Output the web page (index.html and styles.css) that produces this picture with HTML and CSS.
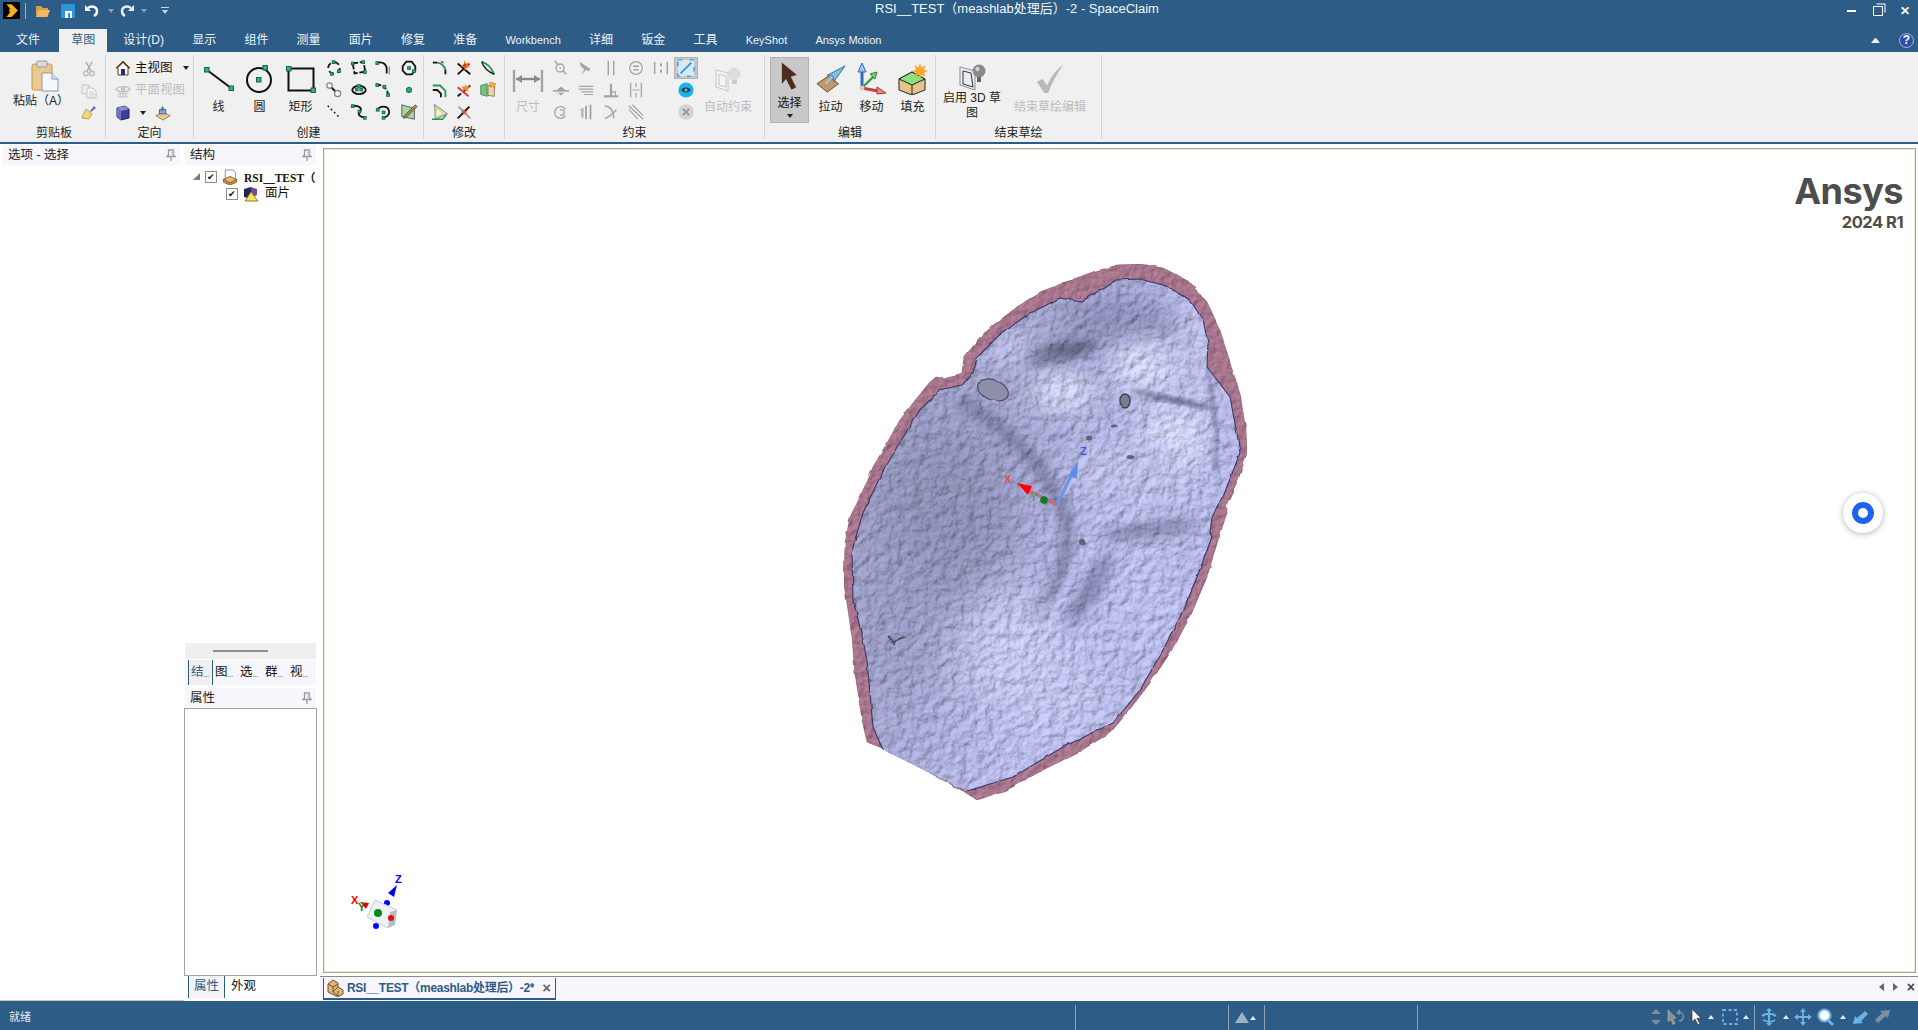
FILE: index.html
```html
<!DOCTYPE html>
<html lang="zh">
<head>
<meta charset="utf-8">
<title>SpaceClaim</title>
<link rel="stylesheet" href="styles.css">
</head>
<body>
<svg class="defs" xmlns="http://www.w3.org/2000/svg">
<defs>
<symbol id="logo" viewBox="0 0 16 16"><rect width="16" height="16" fill="#000"/><path d="M3 2h5l6 6-6 6H3l5-6z" fill="#fbb116"/><path d="M3 2l5 6-5 6z" fill="#000"/><path d="M6 6l3 2-3 2z" fill="#fbb116"/></symbol>
<symbol id="folder" viewBox="0 0 16 14"><path d="M1 2h5l2 2h5v2H4L1 12z" fill="#d9a04c"/><path d="M3.5 6H15l-2.5 7H1z" fill="#f2b860"/></symbol>
<symbol id="save" viewBox="0 0 14 14"><rect width="14" height="14" fill="#2a94dd"/><rect x="4" y="7" width="7" height="7" fill="#fff"/><rect x="7" y="9" width="2" height="5" fill="#2a94dd"/></symbol>
<symbol id="undo" viewBox="0 0 16 16"><path d="M4 5c4-3 9-1 9 3 0 2-1 4-3 5" fill="none" stroke="#fff" stroke-width="2.4"/><path d="M1 2v6h6z" fill="#fff"/></symbol>
<symbol id="redo" viewBox="0 0 16 16"><path d="M12 5C8 2 3 4 3 8c0 2 1 4 3 5" fill="none" stroke="#e8eef4" stroke-width="2.4"/><path d="M15 2v6H9z" fill="#e8eef4"/></symbol>
<symbol id="paste" viewBox="0 0 28 32"><rect x="1" y="4" width="20" height="26" rx="2" fill="#ebc98c" stroke="#c09a58"/><rect x="6" y="1" width="10" height="6" rx="1" fill="#dcdcdc" stroke="#999"/><path d="M11 13h10l6 6v12H11z" fill="#f6f7fc" stroke="#8a94b8"/><path d="M21 13v6h6" fill="#dfe2f0" stroke="#8a94b8"/></symbol>
<symbol id="cut" viewBox="0 0 16 16"><path d="M5 1l5 9M11 1L6 10" stroke="#aaa" stroke-width="1.5"/><circle cx="5" cy="12.500" r="2.300" fill="none" stroke="#bbb" stroke-width="1.400"/><circle cx="11" cy="12.500" r="2.300" fill="none" stroke="#bbb" stroke-width="1.400"/></symbol>
<symbol id="copy" viewBox="0 0 16 16"><path d="M1 2h7v9H1z" fill="#eee" stroke="#c4c4c4"/><path d="M6 5h6l3 3v7H6z" fill="#f4f4f4" stroke="#c4c4c4"/><path d="M8 9h5M8 11h5M8 13h5" stroke="#ccc"/></symbol>
<symbol id="brush" viewBox="0 0 16 16"><path d="M9 6l4-5 2 2-5 4z" fill="#6a72b4"/><path d="M5 4l6 5-3 5-7-1 1-3z" fill="#eed97a" stroke="#b8a35c"/></symbol>
<symbol id="house" viewBox="0 0 16 16"><path d="M8 1L1 8h2v7h10V8h2z" fill="#fff" stroke="#5a3a10"/><path d="M8 1L1 8h2l5-5 5 5h2z" fill="#7a4a14"/><rect x="6" y="9" width="4" height="6" fill="#2a2a7a"/></symbol>
<symbol id="planview" viewBox="0 0 18 18"><path d="M1 7c3-4 13-4 16 0-3 4-13 4-16 0z" fill="none" stroke="#bbb" stroke-width="1.400"/><circle cx="9" cy="7" r="2.500" fill="#c4c4c4"/><path d="M3 12h12M3 15h12M6 10v7M9 10v7M12 10v7" stroke="#c4c4c4"/></symbol>
<symbol id="cube" viewBox="0 0 14 16"><path d="M1 3l8-2 4 3v9l-8 2-4-3z" fill="#3b3f9a" stroke="#23235a"/><path d="M1 3l8-2 4 3-8 2z" fill="#8b8fd8"/><path d="M1 3l4 3v9l-4-3z" fill="#6d71c4"/></symbol>
<symbol id="orient" viewBox="0 0 18 18"><path d="M1 12l8-4 8 4-8 5z" fill="#e9c98c" stroke="#8a7a5a"/><path d="M5 5h7v5H5z" fill="#8ea8d8" stroke="#556"/><path d="M8 1l3 3H9v3H7V4z" fill="#4b6fb8"/></symbol>
<symbol id="bline" viewBox="0 0 32 26"><path d="M4 4l24 18" stroke="#111" stroke-width="2"/><rect class="n5" x="1.500" y="1.500" width="4.500" height="4.500"/><rect class="n5" x="26" y="20" width="4.500" height="4.500"/></symbol>
<symbol id="bcircle" viewBox="0 0 30 30"><circle cx="14" cy="16" r="12" fill="none" stroke="#111" stroke-width="2"/><rect class="n5" x="11.500" y="13.500" width="4.500" height="4.500"/><rect class="n5" x="18" y="1.500" width="4.500" height="4.500"/></symbol>
<symbol id="brect" viewBox="0 0 32 28"><rect x="3.500" y="3.500" width="25" height="22" fill="none" stroke="#111" stroke-width="2"/><rect class="n5" x="1.500" y="1.500" width="4.500" height="4.500"/><rect class="n5" x="26" y="23" width="4.500" height="4.500"/></symbol>
<symbol id="c1" viewBox="0 0 20 20"><circle cx="10" cy="10" r="6.500" fill="none" stroke="#111" stroke-width="2" stroke-dasharray="6 4"/><rect class="n" x="8" y="2" width="3" height="3"/><rect class="n" x="14" y="12" width="3" height="3"/><rect class="n" x="6" y="15" width="3" height="3"/></symbol>
<symbol id="c2" viewBox="0 0 20 20"><path d="M3 5l12-2 2 11-12 2z" fill="none" stroke="#111" stroke-width="2" stroke-dasharray="6 2"/><rect class="n" x="1.500" y="3.500" width="3" height="3"/><rect class="n" x="13" y="2" width="3" height="3"/><rect class="n" x="15" y="13" width="3" height="3"/></symbol>
<symbol id="c3" viewBox="0 0 20 20"><path d="M2 4c6-1 10 1 11 6v6" fill="none" stroke="#111" stroke-width="2"/><path d="M16 8v9" stroke="#5a9" stroke-width="1.500"/><rect class="n" x="1" y="3" width="3" height="3"/></symbol>
<symbol id="c4" viewBox="0 0 20 20"><path d="M7 3h6l4 5v5l-4 4H7l-4-4V8z" fill="none" stroke="#111" stroke-width="2"/><rect class="n" x="8.500" y="8.500" width="3" height="3"/><rect class="n" x="14" y="12" width="3" height="3"/></symbol>
<symbol id="c5" viewBox="0 0 20 20"><path d="M5 5l10 10" stroke="#111" stroke-width="2"/><circle cx="5" cy="5" r="3" fill="#fff" stroke="#888" stroke-width="1.500"/><circle cx="14" cy="14" r="3.400" fill="#fff" stroke="#888" stroke-width="1.500"/></symbol>
<symbol id="c6" viewBox="0 0 20 20"><ellipse cx="10" cy="10" rx="7.500" ry="4.500" fill="none" stroke="#111" stroke-width="2"/><rect class="n" x="6" y="8" width="3" height="3"/><rect class="n" x="11" y="8" width="3" height="3"/><rect class="n" x="8.500" y="4" width="3" height="3"/></symbol>
<symbol id="c7" viewBox="0 0 20 20"><path d="M2 4c6 0 12 4 13 13" fill="none" stroke="#111" stroke-width="2" stroke-dasharray="5 2"/><rect class="n" x="1" y="3" width="3" height="3"/><rect class="n" x="9" y="5" width="3" height="3"/><rect class="n" x="13" y="14" width="3" height="3"/></symbol>
<symbol id="c8" viewBox="0 0 20 20"><circle cx="10" cy="10" r="3" fill="#2da56c" stroke="#0d6b3f"/></symbol>
<symbol id="c9" viewBox="0 0 20 20"><path d="M3 3l14 14" stroke="#111" stroke-width="1.600" stroke-dasharray="2 3"/></symbol>
<symbol id="c10" viewBox="0 0 20 20"><path d="M3 3c8 0 11 3 8 7-3 3 0 6 6 6" fill="none" stroke="#111" stroke-width="2"/><rect class="n" x="1.500" y="2" width="3" height="3"/><rect class="n" x="9" y="8" width="3" height="3"/><rect class="n" x="15" y="15" width="3" height="3"/></symbol>
<symbol id="c11" viewBox="0 0 20 20"><path d="M3 7C6 3 13 3 15 7s0 8-5 9" fill="none" stroke="#111" stroke-width="2"/><rect class="n" x="8" y="9" width="3" height="3"/><rect class="n" x="8" y="15" width="3" height="3"/><rect class="n" x="1.500" y="6" width="3" height="3"/></symbol>
<symbol id="c12" viewBox="0 0 20 20"><path d="M2 2l14 4v12L2 15z" fill="#a8d4a0" stroke="#555"/><path d="M17 2l2 2L7 16l-3 1 1-3z" fill="#b08a50" stroke="#554"/></symbol>
<symbol id="m1" viewBox="0 0 20 20"><path d="M2 4h5" stroke="#111" stroke-width="2"/><path d="M7 4c5 1 8 4 9 8" fill="none" stroke="#1d9a4c" stroke-width="2"/><path d="M16 12v5" stroke="#111" stroke-width="2"/><path d="M11 3l3 1" stroke="#c44" stroke-width="2"/></symbol>
<symbol id="m2" viewBox="0 0 20 20"><path d="M3 17L16 5M3 5l14 12" stroke="#111" stroke-width="2"/><path d="M10 1l2 4 4-1-2 4 4 1-5 1-2 3-1-4-4-1 4-2z" fill="#f08a1c"/><circle cx="11" cy="7" r="2" fill="#e03020"/></symbol>
<symbol id="m3" viewBox="0 0 20 20"><path d="M3 3c6 2 11 7 14 14" fill="none" stroke="#1d9a4c" stroke-width="2"/><path d="M3 3c2 6 7 11 14 14" fill="none" stroke="#222" stroke-width="1.600"/></symbol>
<symbol id="m4" viewBox="0 0 20 20"><path d="M2 5h8l6 6v7" fill="none" stroke="#1d9a4c" stroke-width="2"/><path d="M2 10h5l4 4v4" fill="none" stroke="#111" stroke-width="2"/></symbol>
<symbol id="m5" viewBox="0 0 20 20"><path d="M3 17L17 5" stroke="#111" stroke-width="2" stroke-dasharray="5 2"/><path d="M3 7l12 10" stroke="#d33" stroke-width="2"/><path d="M12 3l1 3 4 0-3 3 1 3-4-2-3 2 1-4-2-2 4 0z" fill="#f08a1c"/></symbol>
<symbol id="m6" viewBox="0 0 20 20"><path d="M2 5l7-2v14l-7-2z" fill="#7ac47a" stroke="#386"/><path d="M10 5l7-1v13l-7-1z" fill="#ead9a8" stroke="#876"/><path d="M15 1l1 2 3 0-2 2 1 3-3-2-3 1 1-3-2-2 3 0z" fill="#f4c020" stroke="#d33" stroke-width=".5"/></symbol>
<symbol id="m7" viewBox="0 0 20 20"><path d="M4 2l14 10-13 6z" fill="none" stroke="#999" stroke-width="1.500"/><path d="M6 6l8 6-9 4z" fill="none" stroke="#cc2"/><path d="M1 18h12l4-5" fill="none" stroke="#1d9a4c" stroke-width="1.500"/></symbol>
<symbol id="m8" viewBox="0 0 20 20"><path d="M3 17L16 4" stroke="#111" stroke-width="2"/><path d="M4 4l13 13" stroke="#999" stroke-width="2"/><path d="M10 6l1 3 3 1-3 1-1 3-1-3-3-1 3-1z" fill="#e05a20"/></symbol>
<symbol id="dim" viewBox="0 0 32 24"><path d="M2 1v22M30 1v22" stroke="#a4a4a4" stroke-width="2.400"/><path d="M4 10h24" stroke="#888" stroke-width="2.400"/><path d="M4 10l6-4v8zM28 10l-6-4v8z" fill="#888"/></symbol>
<symbol id="k1" viewBox="0 0 20 20"><circle cx="9" cy="10" r="4.500" fill="none" stroke="#a4a4a4" stroke-width="1.600"/><path d="M3 2l4 5M12 13l4 4" stroke="#a4a4a4" stroke-width="1.600"/><circle cx="9" cy="10" r="1" fill="#a4a4a4"/></symbol>
<symbol id="k2" viewBox="0 0 20 20"><path d="M3 3l12 8-2 3-3-2-5 6 3-7-4-3z" fill="#a4a4a4"/></symbol>
<symbol id="k3" viewBox="0 0 20 20"><path d="M7 2v16M13 2v16" stroke="#a4a4a4" stroke-width="1.600"/></symbol>
<symbol id="k4" viewBox="0 0 20 20"><circle cx="10" cy="10" r="7" fill="none" stroke="#a4a4a4" stroke-width="1.400"/><path d="M7 8h6M7 12h6" stroke="#999" stroke-width="1.500"/></symbol>
<symbol id="k5" viewBox="0 0 20 20"><path d="M3 3v14M17 3v14" stroke="#a4a4a4" stroke-width="1.600"/><path d="M10 5v3M10 12v3" stroke="#999" stroke-width="2"/></symbol>
<symbol id="k6" viewBox="0 0 20 20"><path d="M1 11h18" stroke="#a4a4a4" stroke-width="1.800"/><path d="M10 6l6 5H4z" fill="#a4a4a4"/><path d="M6 13h8l-4 3z" fill="#a4a4a4"/></symbol>
<symbol id="k7" viewBox="0 0 20 20"><path d="M2 6h16M2 9l16 0M5 12h13M8 15h10" stroke="#a4a4a4" stroke-width="1.300"/></symbol>
<symbol id="k8" viewBox="0 0 20 20"><path d="M2 17h16" stroke="#a4a4a4" stroke-width="2.400"/><path d="M10 3v14" stroke="#a4a4a4" stroke-width="2.400"/><path d="M10 12h5v5" fill="none" stroke="#a4a4a4" stroke-width="1.300"/></symbol>
<symbol id="k9" viewBox="0 0 20 20"><path d="M4 2v16M16 2v16" stroke="#a4a4a4" stroke-width="1.500"/><path d="M10 2v5M10 13v5M6 10h8" stroke="#a4a4a4" stroke-width="1.300"/></symbol>
<symbol id="k10" viewBox="0 0 20 20"><path d="M15 7a6.500 6.500 0 1 0 0 7" fill="none" stroke="#a4a4a4" stroke-width="1.500"/><path d="M9 8a3 3 0 1 1 0 5" fill="none" stroke="#a4a4a4" stroke-width="1.500"/></symbol>
<symbol id="k11" viewBox="0 0 20 20"><path d="M6 7v9M10 3v15M15 2v16" stroke="#a4a4a4" stroke-width="2"/><path d="M3 8l5-2" stroke="#a4a4a4"/></symbol>
<symbol id="k12" viewBox="0 0 20 20"><path d="M3 3c7 1 10 5 10 14" fill="none" stroke="#a4a4a4" stroke-width="1.700"/><path d="M3 17c4 0 8-5 13-9" fill="none" stroke="#a4a4a4" stroke-width="1.700"/></symbol>
<symbol id="k13" viewBox="0 0 20 20"><path d="M2 3l16 15M6 2l12 12M2 7l10 11" stroke="#a4a4a4" stroke-width="1.400"/></symbol>
<symbol id="sel3d" viewBox="0 0 20 20"><rect x="1" y="1" width="18" height="18" fill="#dbe8f4" stroke="#23a7e0" stroke-width="1.600" stroke-dasharray="5 8"/><path d="M4 16L16 4" stroke="#1f9fd8" stroke-width="2"/></symbol>
<symbol id="eye" viewBox="0 0 20 20"><circle cx="10" cy="10" r="9.500" fill="#14b4ec"/><path d="M4 10c3-4 9-4 12 0-3 4-9 4-12 0z" fill="#234" /><circle cx="10" cy="10" r="2" fill="#9ad"/></symbol>
<symbol id="xcirc" viewBox="0 0 20 20"><circle cx="10" cy="10" r="8.500" fill="#d4d4d4"/><path d="M6.500 6.500l7 7M13.500 6.500l-7 7" stroke="#999" stroke-width="2"/></symbol>
<symbol id="auto3d" viewBox="0 0 28 28"><path d="M2 5l12 3v18L2 22z" fill="#f4f4f4" stroke="#c6c6c6"/><path d="M5 9l7 2v11l-7-2z" fill="none" stroke="#c6c6c6"/><circle cx="20" cy="9" r="6.500" fill="#dcdcdc"/><path d="M18 15h5v4h-5z" fill="#ccc"/></symbol>
<symbol id="en3d" viewBox="0 0 28 28"><path d="M2 4l15 4v19L2 22z" fill="#ecedf2" stroke="#8b8b8b"/><path d="M5 8l8 2 2 14-10-3z" fill="none" stroke="#333"/><circle cx="21" cy="8" r="6.500" fill="#8a8a8a"/><circle cx="19.500" cy="6" r="2.200" fill="#d0d0d0"/><path d="M19 14h4v5h-4z" fill="#666"/></symbol>
<symbol id="arrow" viewBox="0 0 22 34"><path d="M2 1l18 15-7 2 6 12-6 3-6-12-5 6z" fill="#4b2c20" stroke="#d0c8c0" stroke-width=".8"/></symbol>
<symbol id="pull" viewBox="0 0 32 30"><path d="M1 20l12-8 11 8-12 9z" fill="#c4986a" stroke="#6a4a30"/><path d="M10 20L24 6" stroke="#9ad0ec" stroke-width="2"/><path d="M31 1L12 11l6 1 1 6z" fill="#7cc0e4" stroke="#356a90"/></symbol>
<symbol id="move" viewBox="0 0 30 32"><path d="M5 3v22" stroke="#3468c0" stroke-width="3"/><path d="M5 0l-4 9h8z" fill="#9acbe4" stroke="#3468c0"/><path d="M5 25l12-12" stroke="#2aa048" stroke-width="2.400"/><path d="M20 9l-7 2 5 5z" fill="#7cd07c" stroke="#2a8038"/><path d="M5 25l16 3" stroke="#c84040" stroke-width="3"/><path d="M29 30l-9-6v7z" fill="#e88" stroke="#a33"/><circle cx="5" cy="25" r="2.500" fill="#dca"/></symbol>
<symbol id="fill" viewBox="0 0 30 32"><path d="M1 16l13-7 13 7v11l-13 5-13-5z" fill="#e7c48a" stroke="#222"/><path d="M1 16l13-7 13 7-13 6z" fill="#8ee07c" stroke="#222"/><path d="M14 22v10" stroke="#222"/><path d="M22 0l1.500 4.500 4-2.500-1.500 4.500 4 1.500-4 1.500 1.500 4.500-4-2.500-1.500 4.500-1.500-4.500-4 2.500 1.500-4.500-4-1.500 4-1.500-1.500-4.500 4 2.500z" fill="#f7a82a"/></symbol>
<symbol id="check" viewBox="0 0 30 32"><path d="M1 19l6-3 5 7C16 13 22 6 29 1 23 10 17 20 13 31H9z" fill="#b9b9b9"/></symbol>
<symbol id="part" viewBox="0 0 16 17"><path d="M3 1l8 0 3 3v8H3z" fill="#fff" stroke="#7a8db8"/><path d="M1 11l7-3 7 3-7 4z" fill="#e7b878" stroke="#8a5a28"/><path d="M1 11v3l7 3 7-3v-3l-7 4z" fill="#cf9a58" stroke="#8a5a28"/></symbol>
<symbol id="facet" viewBox="0 0 16 16"><path d="M1 3l7-2v12l-7-2z" fill="#23265c"/><path d="M8 1l6 2v6l-6 3z" fill="#7a4a8a"/><path d="M8 6l7 9H2z" fill="#f8e654" stroke="#86802a"/></symbol>
<symbol id="blocks" viewBox="0 0 18 18"><path d="M1 5l5-4 5 3v4l5 3v4l-5 3-10-5z" fill="#e1b477" stroke="#7a5028"/><path d="M1 5l5 3 5-3M6 8v5l5 4v-5M11 8l-5 5" fill="none" stroke="#7a5028"/></symbol>
<symbol id="pin" viewBox="0 0 10 12"><path d="M2.500 1h5v5l1.500 1.500h-8L2.500 6zM5 8v4" fill="none" stroke="#9a9a9a" stroke-width="1.300"/><path d="M5.500 1h2v5h-2z" fill="#c4c4c4"/></symbol>
<symbol id="sb-updown" viewBox="0 0 12 18"><path d="M6 1l5 5H1zM6 17l5-5H1z" fill="#7f8ea0"/></symbol>
<symbol id="sb-undo" viewBox="0 0 18 18"><path d="M1 2l8 8-3 .5 2 5-2 1-2-5-3 2z" fill="#8c8c8c" stroke="#ccc" stroke-width=".5"/><path d="M10 5c4-2 7 1 6 5-.5 2-2 3-4 3" fill="none" stroke="#7f8ea0" stroke-width="1.600"/><path d="M13 1l-4 4 4 2z" fill="#7f8ea0"/></symbol>
<symbol id="sb-cursor" viewBox="0 0 12 18"><path d="M1 1l9 9-4 .5 3 5.500-2 1-3-6-3 3z" fill="#fff" stroke="#333" stroke-width=".7"/></symbol>
<symbol id="sb-rect" viewBox="0 0 16 16"><rect x="1" y="1" width="14" height="14" fill="none" stroke="#6cb2e6" stroke-width="1.800" stroke-dasharray="3 2.500"/></symbol>
<symbol id="sb-spin" viewBox="0 0 18 18"><path d="M9 1v16M2 8c4-3 10-3 14 0" fill="none" stroke="#6cb2e6" stroke-width="2.200"/><path d="M3 12c4 2 9 2 12 0" fill="none" stroke="#6cb2e6" stroke-width="1.600"/><path d="M9 0l3 3H6zM9 18l3-3H6z" fill="#6cb2e6"/></symbol>
<symbol id="sb-pan" viewBox="0 0 18 18"><path d="M9 2v14M2 9h14" stroke="#6cb2e6" stroke-width="1.800"/><path d="M9 0l3 4H6zM9 18l3-4H6zM0 9l4-3v6zM18 9l-4-3v6z" fill="#6cb2e6"/></symbol>
<symbol id="sb-zoom" viewBox="0 0 18 18"><circle cx="7.500" cy="7.500" r="6" fill="#fff" stroke="#6cb2e6" stroke-width="2.200"/><path d="M11 12l5 5" stroke="#6cb2e6" stroke-width="3"/></symbol>
<symbol id="sb-prev" viewBox="0 0 18 18"><path d="M2 16l2-8 2 2 8-7 3 3-7 7 2 2z" fill="#6cb2e6"/></symbol>
<symbol id="sb-next" viewBox="0 0 18 18"><path d="M16 2l-2 8-2-2-8 7-3-3 7-7-2-2z" fill="#7f8ea0"/></symbol>
<filter id="bump" x="0" y="0" width="100%" height="100%" color-interpolation-filters="sRGB">
<feTurbulence type="fractalNoise" baseFrequency="0.11" numOctaves="4" seed="7" result="n"/>
<feDiffuseLighting in="n" surfaceScale="1.700" diffuseConstant="1" lighting-color="#fff" result="l"><feDistantLight azimuth="225" elevation="66"/></feDiffuseLighting>
<feComposite in="SourceGraphic" in2="l" operator="arithmetic" k1="1.090" k2="0" k3="0" k4="0"/>
</filter>
<filter id="bump2" x="0" y="0" width="100%" height="100%" color-interpolation-filters="sRGB">
<feTurbulence type="fractalNoise" baseFrequency="0.16" numOctaves="2" seed="3" result="n"/>
<feDiffuseLighting in="n" surfaceScale="1.200" diffuseConstant="1" lighting-color="#fff" result="l"><feDistantLight azimuth="225" elevation="65"/></feDiffuseLighting>
<feComposite in="SourceGraphic" in2="l" operator="arithmetic" k1="1.100" k2="0" k3="0" k4="0"/>
</filter>
<filter id="rough" x="-5%" y="-5%" width="110%" height="110%">
<feTurbulence type="fractalNoise" baseFrequency="0.08" numOctaves="2" seed="11" result="d"/>
<feDisplacementMap in="SourceGraphic" in2="d" scale="3" xChannelSelector="R" yChannelSelector="G"/>
</filter>
<filter id="b6" x="-60%" y="-60%" width="220%" height="220%"><feGaussianBlur stdDeviation="6"/></filter>
<filter id="b12" x="-60%" y="-60%" width="220%" height="220%"><feGaussianBlur stdDeviation="12"/></filter>
<filter id="b26" x="-60%" y="-60%" width="220%" height="220%"><feGaussianBlur stdDeviation="24"/></filter>
<filter id="b2" x="-30%" y="-30%" width="160%" height="160%"><feGaussianBlur stdDeviation="2"/></filter>
<linearGradient id="lav" gradientUnits="userSpaceOnUse" x1="860" y1="500" x2="1170" y2="650"><stop offset="0" stop-color="#9fa2c8"/><stop offset=".4" stop-color="#a6a9d4"/><stop offset=".72" stop-color="#babdea"/><stop offset="1" stop-color="#b5b9e6"/></linearGradient>
<clipPath id="inner"><polygon points="854,543 863,513 880,477 897,447 920,410 940,390 962,385 973,373 977,358 997,337 1027,315 1060,298 1080,302 1097,293 1117,280 1140,279 1163,285 1190,300 1203,320 1208,343 1207,367 1230,397 1238,440 1240,453 1223,497 1212,517 1210,533 1212,537 1197,577 1180,617 1163,650 1140,690 1113,723 1063,747 1013,777 967,791 930,773 883,750 873,727 867,660 863,640 853,600 852,553"/></clipPath>
</defs>
</svg>

<div class="app">
<header class="titlebar">
  <div class="qat">
    <svg class="i16 logo"><use href="#logo"/></svg>
    <span class="qsep"></span>
    <svg class="i16 q-folder"><use href="#folder"/></svg>
    <svg class="i14 q-save"><use href="#save"/></svg>
    <svg class="i16 q-undo"><use href="#undo"/></svg>
    <span class="tri-d tri-grey q-d1"></span>
    <svg class="i16 q-redo"><use href="#redo"/></svg>
    <span class="tri-d tri-grey q-d2"></span>
    <span class="q-more"></span>
  </div>
  <div class="title">RSI__TEST（meashlab处理后）-2 - SpaceClaim</div>
  <div class="winbtns">
    <span class="w-min"></span>
    <span class="w-max"></span>
    <span class="w-close">✕</span>
  </div>
</header>

<nav class="tabs">
  <span class="tab tab-file">文件</span>
  <span class="tab tab-active">草图</span>
  <span class="tab">设计(D)</span>
  <span class="tab">显示</span>
  <span class="tab">组件</span>
  <span class="tab">测量</span>
  <span class="tab">面片</span>
  <span class="tab">修复</span>
  <span class="tab">准备</span>
  <span class="tab tab-en">Workbench</span>
  <span class="tab">详细</span>
  <span class="tab">钣金</span>
  <span class="tab">工具</span>
  <span class="tab tab-en">KeyShot</span>
  <span class="tab tab-en">Ansys Motion</span>
  <span class="tabs-right">
    <span class="collapse"></span>
    <span class="help">?</span>
  </span>
</nav>

<section class="ribbon">
  <div class="group g-clip">
    <div class="gbody">
      <div class="big w76"><span class="bigicon bi-paste"><svg class="s-paste"><use href="#paste"/></svg></span><span class="biglab">粘贴（A）</span></div>
      <div class="smallcol">
        <svg class="i16"><use href="#cut"/></svg>
        <svg class="i16"><use href="#copy"/></svg>
        <svg class="i16"><use href="#brush"/></svg>
      </div>
    </div>
    <div class="glabel">剪贴板</div>
  </div>
  <div class="group g-orient">
    <div class="gbody gcol">
      <div class="orow"><svg class="i16"><use href="#house"/></svg><span class="olab">主视图</span><span class="tri-d tri-dark o-d1"></span></div>
      <div class="orow off"><svg class="i16"><use href="#planview"/></svg><span class="olab">平面视图</span></div>
      <div class="orow"><svg class="i16"><use href="#cube"/></svg><span class="tri-d tri-dark o-d2"></span><svg class="i16 o-i3"><use href="#orient"/></svg></div>
    </div>
    <div class="glabel">定向</div>
  </div>
  <div class="group g-create">
    <div class="gbody">
      <div class="big w41"><span class="bigicon"><svg class="s-line"><use href="#bline"/></svg></span><span class="biglab">线</span></div>
      <div class="big w41"><span class="bigicon"><svg class="s-circ"><use href="#bcircle"/></svg></span><span class="biglab">圆</span></div>
      <div class="big w41"><span class="bigicon"><svg class="s-rect"><use href="#brect"/></svg></span><span class="biglab">矩形</span></div>
      <div class="grid g4">
        <svg class="i18"><use href="#c1"/></svg><svg class="i18"><use href="#c2"/></svg><svg class="i18"><use href="#c3"/></svg><svg class="i18"><use href="#c4"/></svg>
        <svg class="i18"><use href="#c5"/></svg><svg class="i18"><use href="#c6"/></svg><svg class="i18"><use href="#c7"/></svg><svg class="i18"><use href="#c8"/></svg>
        <svg class="i18"><use href="#c9"/></svg><svg class="i18"><use href="#c10"/></svg><svg class="i18"><use href="#c11"/></svg><svg class="i18"><use href="#c12"/></svg>
      </div>
    </div>
    <div class="glabel">创建</div>
  </div>
  <div class="group g-modify">
    <div class="gbody">
      <div class="grid g3">
        <svg class="i18"><use href="#m1"/></svg><svg class="i18"><use href="#m2"/></svg><svg class="i18"><use href="#m3"/></svg>
        <svg class="i18"><use href="#m4"/></svg><svg class="i18"><use href="#m5"/></svg><svg class="i18"><use href="#m6"/></svg>
        <svg class="i18"><use href="#m7"/></svg><svg class="i18"><use href="#m8"/></svg><span></span>
      </div>
    </div>
    <div class="glabel">修改</div>
  </div>
  <div class="group g-cons">
    <div class="gbody">
      <div class="big w40 off"><span class="bigicon"><svg class="s-dim"><use href="#dim"/></svg></span><span class="biglab">尺寸</span></div>
      <div class="grid g6">
        <svg class="i18"><use href="#k1"/></svg><svg class="i18"><use href="#k2"/></svg><svg class="i18"><use href="#k3"/></svg><svg class="i18"><use href="#k4"/></svg><svg class="i18"><use href="#k5"/></svg><span class="cell-on"><svg class="i18"><use href="#sel3d"/></svg></span>
        <svg class="i18"><use href="#k6"/></svg><svg class="i18"><use href="#k7"/></svg><svg class="i18"><use href="#k8"/></svg><svg class="i18"><use href="#k9"/></svg><span></span><svg class="i16"><use href="#eye"/></svg>
        <svg class="i18"><use href="#k10"/></svg><svg class="i18"><use href="#k11"/></svg><svg class="i18"><use href="#k12"/></svg><svg class="i18"><use href="#k13"/></svg><span></span><svg class="i18"><use href="#xcirc"/></svg>
      </div>
      <div class="big w60 off"><span class="bigicon"><svg class="s-3d"><use href="#auto3d"/></svg></span><span class="biglab">自动约束</span></div>
    </div>
    <div class="glabel">约束</div>
  </div>
  <div class="group g-edit">
    <div class="gbody">
      <div class="selbtn">
        <svg class="s-arrow"><use href="#arrow"/></svg>
        <span class="sellab">选择</span>
        <span class="tri-d tri-dark"></span>
      </div>
      <div class="big w41"><span class="bigicon"><svg class="s-tool"><use href="#pull"/></svg></span><span class="biglab">拉动</span></div>
      <div class="big w41"><span class="bigicon"><svg class="s-tool"><use href="#move"/></svg></span><span class="biglab">移动</span></div>
      <div class="big w41"><span class="bigicon"><svg class="s-tool"><use href="#fill"/></svg></span><span class="biglab">填充</span></div>
    </div>
    <div class="glabel">编辑</div>
  </div>
  <div class="group g-end">
    <div class="gbody">
      <div class="big w72"><span class="bigicon b-top"><svg class="s-3d"><use href="#en3d"/></svg></span><span class="biglab lab-wrap">启用 3D 草图</span></div>
      <div class="big w84 off"><span class="bigicon"><svg class="s-check"><use href="#check"/></svg></span><span class="biglab">结束草绘编辑</span></div>
    </div>
    <div class="glabel">结束草绘</div>
  </div>
</section>
<div class="rule"></div>

<main class="workspace">
  <aside class="left">
    <div class="phead"><span>选项 - 选择</span><svg class="pin"><use href="#pin"/></svg></div>
  </aside>
  <aside class="mid">
    <div class="phead"><span>结构</span><svg class="pin"><use href="#pin"/></svg></div>
    <div class="tree">
      <div class="tnode">
        <span class="expander"></span>
        <span class="cbox">✔</span>
        <svg class="i16"><use href="#part"/></svg>
        <span class="tname">RSI__TEST（meashlab处理后）-2</span>
      </div>
      <div class="tnode sub">
        <span class="cbox">✔</span>
        <svg class="i16"><use href="#facet"/></svg>
        <span class="tchild">面片</span>
      </div>
    </div>
    <div class="splitter"><span></span></div>
    <div class="minitabs">
      <span class="mtab on">结<i>...</i></span>
      <span class="mtab">图<i>...</i></span>
      <span class="mtab">选<i>...</i></span>
      <span class="mtab">群<i>...</i></span>
      <span class="mtab">视<i>...</i></span>
    </div>
    <div class="phead props"><span>属性</span><svg class="pin"><use href="#pin"/></svg></div>
    <div class="propbox"></div>
    <div class="proptabs">
      <span class="ptab on">属性</span>
      <span class="ptab">外观</span>
    </div>
  </aside>
  <div class="right">
    <div class="viewport">
      <svg class="scene" viewBox="323 148 1593 826" xmlns="http://www.w3.org/2000/svg">
        <g filter="url(#rough)">
          <polygon class="shell" filter="url(#bump2)" points="845,543 850,517 860,497 873,467 887,443 900,420 913,403 930,382 936,377 945,379 962,373 964,357 987,330 1017,307 1040,292 1063,283 1090,273 1117,265 1140,264 1163,268 1187,280 1207,302 1220,330 1230,363 1240,393 1246,430 1247,453 1238,480 1227,503 1227,513 1218,540 1207,577 1190,617 1170,653 1150,683 1127,713 1110,733 1077,753 1043,770 1007,790 977,800 963,791 930,773 887,750 867,742 862,720 855,673 852,637 844,583"/>
          <g clip-path="url(#inner)">
            <g filter="url(#bump)">
              <rect x="840" y="260" width="420" height="550" fill="url(#lav)"/>
              <ellipse cx="1195" cy="350" rx="60" ry="60" fill="#bdc0ea" filter="url(#b12)"/>
              <ellipse cx="1120" cy="322" rx="60" ry="24" fill="#8f91bc" filter="url(#b12)"/>
              <ellipse cx="1060" cy="352" rx="38" ry="9" fill="#5f6180" filter="url(#b6)" transform="rotate(-12 1060 352)"/>
              <ellipse cx="1140" cy="366" rx="28" ry="24" fill="#d4d6f4" filter="url(#b12)"/>
              <ellipse cx="1063" cy="392" rx="30" ry="18" fill="#d8daf6" filter="url(#b12)"/>
              <ellipse cx="1172" cy="442" rx="30" ry="32" fill="#d6d8f6" filter="url(#b12)"/>
              <ellipse cx="1010" cy="350" rx="26" ry="16" fill="#bec0ea" filter="url(#b12)"/>
              <ellipse cx="1175" cy="400" rx="42" ry="3" fill="#6e7096" filter="url(#b2)" transform="rotate(12 1175 400)"/>
              <path d="M1208 367C1212 400 1222 430 1214 470" fill="none" stroke="#6e7096" stroke-width="3" filter="url(#b2)"/>
              <ellipse cx="945" cy="520" rx="70" ry="100" fill="#8f92b8" filter="url(#b26)"/>
              <path d="M960 400C1010 430 1050 470 1066 520 1072 550 1056 590 1030 620" fill="none" stroke="#6f7198" stroke-width="10" filter="url(#b6)"/>
              <ellipse cx="900" cy="620" rx="38" ry="70" fill="#999cc4" filter="url(#b26)"/>
              <ellipse cx="1010" cy="650" rx="50" ry="60" fill="#c6c9f0" filter="url(#b26)"/>
              <ellipse cx="1060" cy="700" rx="46" ry="34" fill="#c2c5ee" filter="url(#b26)"/>
              <ellipse cx="1090" cy="590" rx="10" ry="44" fill="#8486b0" filter="url(#b6)" transform="rotate(32 1090 590)"/>
              <ellipse cx="1150" cy="530" rx="52" ry="8" fill="#8587ae" filter="url(#b6)" transform="rotate(-8 1150 530)"/>
              <ellipse cx="1148" cy="610" rx="28" ry="50" fill="#bcbfec" filter="url(#b12)"/>
              <ellipse cx="1130" cy="470" rx="60" ry="30" fill="#bcbfe8" filter="url(#b12)"/>
            </g>
            <ellipse class="hole" cx="993" cy="390" rx="16" ry="10" transform="rotate(22 993 390)"/>
            <ellipse class="hole2" cx="1125" cy="401" rx="5" ry="7"/>
            <ellipse class="hole3" cx="1089" cy="438" rx="3" ry="2.500"/>
            <ellipse class="hole3" cx="1130" cy="457" rx="3.500" ry="2"/>
            <ellipse class="hole3" cx="1114" cy="426" rx="3" ry="1.500"/>
            <ellipse class="hole3" cx="1082" cy="542" rx="3" ry="3"/>
            <path class="crease" d="M888 636c4 4 6 8 6 8 3-5 6-6 12-7"/>
          </g>
          <polyline class="edge" points="967,791 1013,777 1063,747 1113,723 1140,690 1163,650 1180,617 1197,577 1212,537 1210,533 1212,517 1223,497 1240,453 1238,440 1230,397 1207,367 1208,343 1203,320 1190,300 1163,285 1140,279 1117,280 1097,293 1080,302 1060,298 1027,315 997,337 977,358 973,373 962,385 940,390 920,410 897,447 880,477 863,513 854,543 852,553 853,600 863,640 867,660 873,727 883,750"/>
        </g>
        <g class="triad">
          <path d="M1057 505L1073 472" stroke="#6a95ea" stroke-width="3"/>
          <path d="M1078 461l-9 14 8 4z" fill="#5f8cec"/>
          <path d="M1057 505L1030 491" stroke="#c76a76" stroke-width="3"/>
          <path d="M1017 483l15 3-4 9z" fill="#f00"/>
          <circle cx="1044" cy="500" r="3.800" fill="#0f7a2a"/>
          <text class="ax az" x="1080" y="455">Z</text>
          <text class="ax ax-x" x="1004" y="483">X</text>
          <text class="ax ay" x="1030" y="501">Y</text>
        </g>
        <g class="triad">
          <path d="M397 885l-9 8 6 4z" fill="#00f"/>
          <path d="M360 902l9 1-3 6z" fill="#e00"/>
          <circle cx="387" cy="903" r="3" fill="#00f"/>
          <circle cx="376" cy="926" r="3" fill="#00f"/>
          <path d="M375 900l22 10-9 18-21-11z" fill="#eef2f2" stroke="#c4cce0"/>
          <path d="M397 910l-2 15-7 3 2-16z" fill="#b8bcc4"/>
          <circle cx="378" cy="913" r="4" fill="#0a8a1c"/>
          <circle cx="391" cy="918" r="3" fill="#e01010"/>
          <text class="ax2 a-z" x="395" y="883">Z</text>
          <text class="ax2 a-x" x="351" y="904">X</text>
          <text class="ax2 a-y" x="358" y="911">Y</text>
        </g>
      </svg>
      <div class="brand">
        <div class="brand-name">Ansys</div>
        <div class="brand-ver">2024 R1</div>
      </div>
      <div class="floatbtn"><span></span></div>
    </div>
    <div class="docbar">
      <div class="doctab">
        <svg class="i18"><use href="#blocks"/></svg>
        <span class="docname">RSI__TEST（meashlab处理后）-2*</span>
        <span class="docx">×</span>
      </div>
      <div class="docnav">
        <span class="nav-l"></span>
        <span class="nav-r"></span>
        <span class="nav-x">×</span>
      </div>
    </div>
  </div>
</main>

<footer class="status">
  <span class="cell c-a">就绪</span>
  <span class="cell c-b"></span>
  <span class="cell c-c"><span class="tri-big"></span><span class="tri-u"></span></span>
  <span class="cell c-d"></span>
  <span class="sb-icons">
    <svg class="sb sb-w12"><use href="#sb-updown"/></svg>
    <svg class="sb"><use href="#sb-undo"/></svg>
    <svg class="sb sb-w12 ml4"><use href="#sb-cursor"/></svg><span class="tri-u"></span>
    <svg class="sb sb-w14"><use href="#sb-rect"/></svg><span class="tri-u"></span>
    <span class="sb-sep"></span>
    <svg class="sb"><use href="#sb-spin"/></svg><span class="tri-u"></span>
    <svg class="sb ml2"><use href="#sb-pan"/></svg>
    <svg class="sb ml2"><use href="#sb-zoom"/></svg><span class="tri-u"></span>
    <svg class="sb ml2"><use href="#sb-prev"/></svg>
    <svg class="sb ml2"><use href="#sb-next"/></svg>
  </span>
</footer>
</div>
</body>
</html>
```
FILE: styles.css
```css
* { box-sizing: border-box; }
html, body { margin: 0; height: 100%; overflow: hidden; background: #fff; }
body { font: 12px/1.2 "Liberation Sans", "Noto Sans CJK SC", sans-serif; color: #111; }
svg { display: block; flex: none; }
.defs { position: absolute; width: 0; height: 0; }
.app { width: 1918px; height: 1030px; display: flex; flex-direction: column; }
.i14 { width: 14px; height: 14px; }
.i16 { width: 16px; height: 16px; }
.i18 { width: 18px; height: 18px; }
.n, .n5 { fill: #3dae7e; stroke: #0b6a40; stroke-width: 1; }

/* title bar */
.titlebar { height: 29px; background: #2d5c87; display: flex; align-items: center; color: #fff; }
.qat { width: 875px; display: flex; align-items: center; padding: 0 0 8px 3px; }
.logo { width: 17px; height: 17px; }
.qsep { width: 1px; height: 16px; background: #9db3c8; margin: 0 9px 0 5px; }
.q-save { margin-left: 10px; }
.q-undo { margin-left: 9px; width: 16px; }
.q-d1 { margin: 0 0 0 8px; }
.q-redo { margin-left: 5px; }
.q-d2 { margin-left: 6px; }
.q-more { width: 8px; height: 7px; margin-left: 14px; border-top: 1px solid #c8d4e0; position: relative; }
.q-more::after { content: ""; position: absolute; left: 1px; top: 2px; border: 3px solid transparent; border-top: 4px solid #c8d4e0; border-bottom: 0; }
.title { flex: 1; font-size: 13px; color: #f4f7fa; white-space: nowrap; margin-top: -11px; }
.winbtns { display: flex; align-items: center; margin-top: -8px; height: 14px; gap: 17px; padding-right: 7px; }
.w-min { width: 9px; height: 2px; background: #fff; }
.w-max { width: 10px; height: 10px; border: 1.500px solid #fff; box-shadow: 2px -2px 0 -0.500px #2d5c87, 3px -3px 0 -0.500px #fff; }
.w-close { font-size: 12px; width: 11px; font-weight: bold; line-height: 12px; }

/* tabs */
.tabs { height: 23px; background: #2d5c87; display: flex; align-items: stretch; padding-left: 2px; color: #eef3f8; position: relative; }
.tab { padding: 3px 14.100px 0; line-height: 17px; white-space: nowrap; }
.tab-en { font-size: 11px; }
.tab-file { margin-right: 5px; }
.tab-active { background: #f0f0f0; color: #2d5c87; padding: 3px 12px 0; margin-right: 2px; }
.tabs-right { margin-left: auto; display: flex; align-items: center; gap: 19px; padding-right: 4px; }
.collapse { width: 9px; height: 5px; border-left: 4.500px solid transparent; border-right: 4.500px solid transparent; border-bottom: 5px solid #eee; }
.help { width: 15px; height: 15px; border-radius: 50%; background: #2f4fa8; border: 1.500px solid #a9b7cf; color: #fff; font-weight: bold; font-size: 12px; line-height: 12px; text-align: center; }

/* ribbon */
.ribbon { height: 90px; background: #f0f0f0; display: flex; padding: 3px 0 3px 3px; }
.group { display: flex; flex-direction: column; border-right: 1px solid #d4d4d4; }
.g-clip { width: 103px; }
.g-orient { width: 88px; }
.g-create { width: 230px; }
.g-modify { width: 81px; }
.g-cons { width: 260px; }
.g-edit { width: 171px; }
.g-end { width: 166px; }
.gbody { flex: 1; display: flex; padding-top: 2px; min-height: 0; }
.gcol { flex-direction: column; }
.glabel { height: 18px; line-height: 24px; text-align: center; font-size: 12px; color: #222; }
.big { display: flex; flex-direction: column; align-items: center; flex: none; }
.off .biglab { color: #bdbdbd; }
.orow.off { color: #bdbdbd; }
.w40 { width: 40px; }
.w41 { width: 41px; }
.w60 { width: 60px; }
.w72 { width: 72px; }
.w76 { width: 76px; }
.w84 { width: 84px; }
.bigicon { height: 43px; display: flex; align-items: center; justify-content: center; }
.bi-paste { height: 37px; }
.biglab { line-height: 15px; text-align: center; color: #222; white-space: nowrap; }
.lab-wrap { white-space: normal; width: 60px; }
.b-top { height: 38px; align-items: flex-end; }
.s-paste { width: 28px; height: 32px; margin-left: 8px; }
.s-line { width: 32px; height: 26px; }
.s-circ { width: 30px; height: 30px; }
.s-rect { width: 32px; height: 28px; }
.s-dim { width: 34px; height: 24px; margin-top: 4px; }
.s-3d { width: 28px; height: 28px; }
.s-tool { width: 30px; height: 32px; }
.s-check { width: 28px; height: 32px; }
.g-create .gbody { padding-left: 4px; }
.smallcol { display: flex; flex-direction: column; align-items: center; width: 20px; padding-top: 4px; gap: 6px; }
.orow { height: 22.500px; display: flex; align-items: center; padding-left: 9px; flex: none; }
.olab { margin-left: 4px; font-size: 12.500px; }
.o-d1 { margin-left: 10px; }
.o-d2 { margin-left: 9px; }
.o-i3 { margin-left: 9px; }
.grid { display: grid; grid-auto-rows: 22px; justify-items: center; align-items: center; }
.g3 { grid-template-columns: repeat(3, 24px); padding-left: 4px; }
.g4 { grid-template-columns: repeat(4, 25px); }
.g6 { grid-template-columns: repeat(6, 25px); }
.g-cons .gbody { padding-left: 3px; }
.cell-on { width: 24px; height: 22px; background: #c6c6c6; display: flex; align-items: center; justify-content: center; border: 1px solid #b4b4b4; }
.selbtn { width: 39px; height: 66px; margin-left: 5px; margin-right: 1px; background: #c8c8c8; border: 1px solid #b2b2b2; display: flex; flex-direction: column; align-items: center; padding-top: 3px; }
.s-arrow { width: 21px; height: 30px; }
.sellab { margin-top: 5px; line-height: 15px; }
.selbtn .tri-d { margin-top: 3px; }
.tri-d { display: block; width: 0; height: 0; border-left: 3.500px solid transparent; border-right: 3.500px solid transparent; border-top: 4px solid #777; flex: none; }
.tri-grey { border-top-color: #8fa4ba; }
.tri-dark { border-top-color: #222; }

.rule { height: 2px; background: #2d5c87; }

/* workspace */
.workspace { flex: 1; display: flex; min-height: 0; background: #fff; }
.left { width: 184px; padding: 1px 4px 0 3px; border-bottom: 1px solid #c4c4c4; }
.phead { height: 20px; background: #f6f6fc; display: flex; align-items: center; justify-content: space-between; padding: 0 4px 0 5px; font-size: 12.500px; color: #222; flex: none; }
.pin { width: 10px; height: 12px; }
.mid { width: 136px; padding: 1px 4px 3px 1px; display: flex; flex-direction: column; }
.tree { flex: 1; padding-top: 3px; min-height: 0; overflow: hidden; }
.tnode { height: 17px; display: flex; align-items: center; padding-left: 8px; white-space: nowrap; overflow: hidden; }
.tnode.sub { padding-left: 41px; }
.expander { width: 0; height: 0; border-left: 7px solid transparent; border-bottom: 7px solid #7a7a7a; margin: 0 5px 0 0; flex: none; }
.cbox { width: 12px; height: 12px; border: 1px solid #8c8c8c; background: #fff; font-size: 9px; line-height: 10px; text-align: center; margin-right: 5px; flex: none; }
.tname { font: bold 11.500px "Liberation Serif", "Noto Sans CJK SC", serif; margin-left: 6px; overflow: hidden; }
.tchild { margin-left: 6px; font-size: 12.500px; }
.splitter { height: 16px; background: #efefef; margin-bottom: 1px; display: flex; align-items: center; justify-content: center; flex: none; }
.splitter span { width: 55px; height: 2px; background: #8c8c8c; margin-left: -21px; }
.minitabs { height: 25px; background: #f6f6fc; display: flex; padding-left: 3px; margin-bottom: 3px; flex: none; }
.mtab { width: 25px; display: flex; align-items: center; padding-left: 2px; font-size: 12.500px; overflow: hidden; white-space: nowrap; }
.mtab i { font-style: normal; font-size: 8px; color: #2d5c87; margin-top: 5px; letter-spacing: -0.500px; }
.mtab.on { border-left: 1px solid #2d5c87; border-right: 1px solid #2d5c87; background: #f0f0f0; color: #2d5c87; }
.propbox { width: 133px; height: 268px; margin-left: -1px; border: 1px solid #a4a4a4; flex: none; }
.proptabs { height: 22px; display: flex; padding-left: 3px; flex: none; font-size: 12.500px; }
.ptab { padding: 3px 5px 0; }
.ptab.on { background: #f4f4f6; color: #2d5c87; border-left: 1px solid #2d5c87; border-right: 1px solid #2d5c87; width: 37px; margin-right: 1px; }

.right { flex: 1; display: flex; flex-direction: column; min-width: 0; padding: 4px 2px 0 3px; }
.viewport { height: 825px; margin-bottom: 3px; position: relative; border: 1px solid #aaa68e; box-shadow: inset 0 0 0 1px #ece9d8; background: #fff; overflow: hidden; flex: none; }
.scene { position: absolute; left: -1px; top: -1px; width: 1593px; height: 826px; }
.shell { fill: #a9768d; stroke: #9a6a82; stroke-width: .5; }
.edge { fill: none; stroke: #37386a; stroke-width: 1.100; stroke-linejoin: round; }
.hole { fill: #8d8fa8; stroke: #4a4c66; stroke-width: 1.200; }
.hole2 { fill: #7c7e90; stroke: #43455c; stroke-width: 1.500; }
.hole3 { fill: #4c4d5c; opacity: .8; }
.crease { fill: none; stroke: #4a4b62; stroke-width: 1.800; }
.ax { font: bold 11px "Liberation Sans", sans-serif; }
.az { fill: #4a55ee; }
.ax-x { fill: #e05050; }
.ay { fill: #4aa070; }
.ax2 { font: bold 11px "Liberation Sans", sans-serif; }
.a-z { fill: #0000f0; }
.a-x { fill: #f00000; }
.a-y { fill: #128a20; }
.brand { position: absolute; right: 12px; top: 23px; text-align: right; color: #4d4d4d; font-family: Inter, "Liberation Sans", sans-serif; font-weight: 700; }
.brand-name { font-size: 36px; line-height: 38px; letter-spacing: -0.500px; }
.brand-ver { font-size: 16.500px; line-height: 20px; letter-spacing: -0.500px; margin-top: 2px; }
.floatbtn { position: absolute; right: 32px; top: 344px; width: 40px; height: 40px; border-radius: 50%; background: #fff; box-shadow: 0 1px 6px rgba(0,0,0,.3); display: flex; align-items: center; justify-content: center; }
.floatbtn span { width: 22px; height: 22px; border-radius: 50%; border: 6px solid #1f62f0; background: #fff; }

.docbar { flex: 1; background: #f6f6fc; border-top: 1px solid #8a8a8a; margin: 0 -2px 0 -3px; padding-left: 3px; display: flex; justify-content: space-between; min-height: 0; }
.doctab { width: 233px; height: 22px; margin-top: 1px; border: 1px solid #2d5c87; border-top: 0; border-bottom-width: 2px; display: flex; align-items: center; padding-left: 3px; }
.docname { margin-left: 2px; color: #2d5c87; font-weight: bold; font-size: 12px; letter-spacing: -0.300px; white-space: nowrap; }
.docx { margin-left: auto; margin-right: 4px; color: #666; font-size: 15px; font-weight: bold; line-height: 14px; }
.docnav { display: flex; align-items: center; gap: 9px; padding: 0 3px 4px 0; }
.nav-l { width: 0; height: 0; border: 4px solid transparent; border-right: 5px solid #666; border-left: 0; }
.nav-r { width: 0; height: 0; border: 4px solid transparent; border-left: 5px solid #666; border-right: 0; }
.nav-x { font-size: 14px; font-weight: bold; color: #444; line-height: 12px; }

/* status */
.status { height: 29px; background: #2d5c87; display: flex; align-items: stretch; color: #e8eef4; font-size: 11px; }
.cell { display: flex; align-items: center; border-right: 1px solid #8ba3b9; margin: 4px 0 0; flex: none; }
.c-a { width: 1076px; padding-left: 9px; }
.c-b { width: 153px; }
.c-c { width: 36px; padding-left: 6px; }
.c-c .tri-u { margin-left: 1px; }
.c-d { width: 153px; }
.tri-big { width: 0; height: 0; border-left: 7px solid transparent; border-right: 7px solid transparent; border-bottom: 11px solid #9fb2c4; }
.tri-u { width: 0; height: 0; border-left: 3.500px solid transparent; border-right: 3.500px solid transparent; border-bottom: 4px solid #e8eef4; flex: none; margin-left: 5px; }
.sb-icons { flex: 1; display: flex; align-items: center; justify-content: flex-end; padding: 3px 26px 0 0; }
.sb { width: 18px; height: 18px; }
.sb-w12 { width: 12px; }
.sb-w14 { width: 16px; margin-left: 8px; }
.sb-icons .sb:first-child { margin-right: 5px; }
.sb-sep { width: 1px; height: 25px; background: #8ba3b9; margin: 0 5px 0 5px; }
.ml2 { margin-left: 5px; }
.ml4 { margin-left: 6px; }
```
